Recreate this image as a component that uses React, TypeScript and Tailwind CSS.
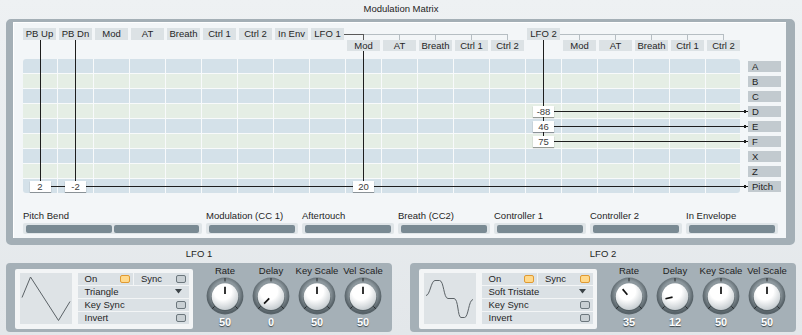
import React from "react";

const topRow: (string | null)[] = [
  "PB Up", "PB Dn", "Mod", "AT", "Breath", "Ctrl 1", "Ctrl 2", "In Env", "LFO 1",
  null, null, null, null, null,
  "LFO 2",
  null, null, null, null, null,
];

const subRow: (string | null)[] = [
  null, null, null, null, null, null, null, null, null,
  "Mod", "AT", "Breath", "Ctrl 1", "Ctrl 2",
  null,
  "Mod", "AT", "Breath", "Ctrl 1", "Ctrl 2",
];

const targets = ["A", "B", "C", "D", "E", "F", "X", "Z", "Pitch"];

// row-col -> amount
const amounts: Record<string, string> = {
  "8-0": "2",
  "8-1": "-2",
  "8-9": "20",
  "3-14": "-88",
  "4-14": "46",
  "5-14": "75",
};

const sources = [
  { label: "Pitch Bend", wide: true },
  { label: "Modulation (CC 1)" },
  { label: "Aftertouch" },
  { label: "Breath (CC2)" },
  { label: "Controller 1" },
  { label: "Controller 2" },
  { label: "In Envelope" },
];

// header button centre / grid column centre in matrix-local px
const hx = (i: number) => 16.5 + i * 36;
const gx = (i: number) => (i === 0 ? 17.5 : 52.5 + (i - 1) * 36);
const ry = (r: number) => 31 + r * 15 + 7.5;

const Wires = () => {
  const arrow = (y: number) => (
    <polygon key={`a${y}`} points={`721,${y - 2} 725,${y} 721,${y + 2}`} fill="#1e1e1e" />
  );
  return (
    <svg
      className="absolute left-0 top-0 z-[5] pointer-events-none"
      width={758}
      height={166}
      shapeRendering="crispEdges"
    >
      {/* LFO 1 bus */}
      <line x1={321} y1={6.5} x2={hx(13)} y2={6.5} stroke="#b6bec3" />
      {[10, 11, 12, 13].map((i) => (
        <line key={i} x1={hx(i)} y1={6.5} x2={hx(i)} y2={11.5} stroke="#b6bec3" />
      ))}
      <line x1={321} y1={6.5} x2={hx(9)} y2={6.5} stroke="#5a5a5a" />
      <line x1={hx(9)} y1={6.5} x2={hx(9)} y2={11.5} stroke="#5a5a5a" />
      {/* LFO 2 bus */}
      <line x1={537} y1={6.5} x2={hx(19)} y2={6.5} stroke="#b6bec3" />
      {[15, 16, 17, 18, 19].map((i) => (
        <line key={i} x1={hx(i)} y1={6.5} x2={hx(i)} y2={11.5} stroke="#b6bec3" />
      ))}

      {/* verticals */}
      <line x1={gx(0)} y1={11.5} x2={gx(0)} y2={ry(8)} stroke="#1e1e1e" />
      <line x1={gx(1)} y1={11.5} x2={gx(1)} y2={ry(8)} stroke="#1e1e1e" />
      <line x1={gx(9)} y1={23} x2={gx(9)} y2={ry(8)} stroke="#1e1e1e" />
      <line x1={gx(14)} y1={11.5} x2={gx(14)} y2={ry(5)} stroke="#1e1e1e" />

      {/* horizontals */}
      <line x1={gx(0)} y1={ry(8)} x2={722} y2={ry(8)} stroke="#1e1e1e" />
      {[3, 4, 5].map((r) => (
        <line key={r} x1={gx(14)} y1={ry(r)} x2={722} y2={ry(r)} stroke="#1e1e1e" />
      ))}
      {[ry(3), ry(4), ry(5), ry(8)].map(arrow)}
    </svg>
  );
};

const Knob = ({ value, id }: { value: number; id: string }) => {
  const a = ((-135 + value * 2.7) * Math.PI) / 180;
  const cx = 19;
  const cy = 19.6;
  const tick = (deg: number) => {
    const t = (deg * Math.PI) / 180;
    return (
      <line
        key={deg}
        x1={19 + Math.sin(t) * 14.6}
        y1={19 - Math.cos(t) * 14.6}
        x2={19 + Math.sin(t) * 18}
        y2={19 - Math.cos(t) * 18}
        stroke="#26292b"
        strokeWidth={1}
      />
    );
  };
  return (
    <svg width={38} height={38} viewBox="0 0 38 38">
      <defs>
        <radialGradient id={`ring-${id}`} cx="50%" cy="45%" r="50%">
          <stop offset="0.72" stopColor="#8c979d" />
          <stop offset="1" stopColor="#576268" />
        </radialGradient>
        <radialGradient id={`cap-${id}`} cx="42%" cy="30%" r="72%">
          <stop offset="0.45" stopColor="#ffffff" />
          <stop offset="1" stopColor="#c3cace" />
        </radialGradient>
      </defs>
      <circle cx={19} cy={19} r={18.4} fill={`url(#ring-${id})`} />
      {[0, -135, 135].map(tick)}
      <circle cx={19} cy={20.6} r={13.8} fill="#3e484d" opacity={0.55} />
      <circle cx={cx} cy={cy} r={13.3} fill={`url(#cap-${id})`} />
      <line
        x1={cx + Math.sin(a) * 2.5}
        y1={cy - Math.cos(a) * 2.5}
        x2={cx + Math.sin(a) * 9.8}
        y2={cy - Math.cos(a) * 9.8}
        stroke="#111"
        strokeWidth={1.7}
      />
    </svg>
  );
};

const Toggle = ({ on }: { on: boolean }) => (
  <div
    className={
      on
        ? "w-[10px] h-[8px] rounded-[2px] border border-[#e09a32] bg-[#ffd98c]"
        : "w-[10px] h-[8px] rounded-[2px] border border-[#6c777d] bg-[#c9d0d4]"
    }
  />
);

const Cell = ({ children }: { children: React.ReactNode }) => (
  <div className="h-[11.5px] bg-[#dbe1e5] flex items-center justify-between pl-[7px] pr-[3px] text-[9.5px] leading-none text-[#262626]">
    {children}
  </div>
);

const TriangleWave = () => (
  <svg width={52} height={51} viewBox="0 0 52 51">
    <polyline points="2,24.5 10.5,4 38.5,47.5 50,28.5" fill="none" stroke="#5b6266" strokeWidth={1} />
  </svg>
);

const SoftTriWave = () => (
  <svg width={52} height={51} viewBox="0 0 52 51">
    <path
      d="M2,22.5 C6,22.5 7,7.5 11,7.5 L15.5,7.5 C20,7.5 19.5,25.5 24,25.5 L30,25.5 C34.5,25.5 33.5,44.5 37,44.5 L40.5,44.5 C44.5,44.5 44.5,27 49,26.5"
      fill="none"
      stroke="#5b6266"
      strokeWidth={1}
    />
  </svg>
);

type LfoProps = {
  title: string;
  id: string;
  wave: React.ReactNode;
  shape: string;
  sync: boolean;
  knobs: number[];
};

const Lfo = ({ title, id, wave, shape, sync, knobs }: LfoProps) => (
  <div className="flex flex-col w-[386px]">
    <div className="h-[18px] flex items-center justify-center text-[9.5px] text-[#1e1e1e]">{title}</div>
    <div className="h-[69px] bg-[#a5b0b7] rounded-[4px] flex items-start pl-[9px] pt-[6px]">
      {/* wave + switches */}
      <div className="w-[178px] h-[60px] bg-[#f3f5f6] rounded-[2px] flex pl-[5px] pt-[4px] gap-[5.5px]">
        <div className="w-[52px] h-[51px] bg-[#dee3e6]">{wave}</div>
        <div className="w-[111.5px] flex flex-col gap-[1.5px]">
          <div className="flex gap-[1.5px]">
            <div className="flex-1">
              <Cell>
                <span>On</span>
                <Toggle on={true} />
              </Cell>
            </div>
            <div className="flex-1">
              <Cell>
                <span>Sync</span>
                <Toggle on={sync} />
              </Cell>
            </div>
          </div>
          <Cell>
            <span>{shape}</span>
            <svg width={8} height={5} className="mr-[3px]">
              <polygon points="0,0 7,0 3.5,4.5" fill="#3b4347" />
            </svg>
          </Cell>
          <Cell>
            <span>Key Sync</span>
            <Toggle on={false} />
          </Cell>
          <Cell>
            <span>Invert</span>
            <Toggle on={false} />
          </Cell>
        </div>
      </div>
      {/* knobs */}
      <div className="ml-[9px] -mt-[4px] flex">
        {["Rate", "Delay", "Key Scale", "Vel Scale"].map((k, i) => (
          <div key={k} className="w-[46px] flex flex-col items-center">
            <div className="h-[12px] leading-[12px] text-[9.5px] text-[#1e1e1e] whitespace-nowrap">{k}</div>
            <Knob value={knobs[i]} id={`${id}-${i}`} />
            <div className="mt-[1px] h-[12px] leading-[12px] text-[11px] font-bold text-white [text-shadow:0_1px_1px_#3b454b]">
              {knobs[i]}
            </div>
          </div>
        ))}
      </div>
    </div>
  </div>
);

const App: React.FC = () => {
  return (
    <div className="w-[802px] h-[335px] overflow-hidden bg-linear-to-b from-[#eef1f3] to-[#e3e7ea] font-['Liberation_Sans',Arial,sans-serif] text-[#1e1e1e]">
      {/* title */}
      <div className="h-[19px] flex items-center justify-center text-[9.5px]">Modulation Matrix</div>

      {/* matrix panel */}
      <div className="ml-[6px] w-[789px] h-[226px] rounded-[5px] border-[#a4afb6] border-t-[3px] border-l-[7px] border-r-[9px] border-b-[7px] bg-[#f3f6f8] shadow-[inset_1px_1px_0_#ffffff]">
        <div className="pl-[10px] pt-[6px]">
          <div className="relative flex w-[758px]">
            <Wires />
            <div className="w-[717px] flex flex-col">
              {/* source header */}
              <div className="grid grid-cols-[repeat(20,33px)] grid-rows-[11.5px_11.5px] gap-x-[3px]">
                {[...topRow, ...subRow].map((s, i) =>
                  s ? (
                    <div
                      key={i}
                      className="bg-[#dce2e5] flex items-center justify-center text-[9.5px] leading-none text-[#262626]"
                    >
                      {s}
                    </div>
                  ) : (
                    <div key={i} />
                  )
                )}
              </div>
              {/* grid */}
              <div className="mt-[8px] grid grid-cols-[34px_repeat(18,35px)_34px] grid-rows-[repeat(9,14px)] gap-[1px] bg-[#f8fafb] rounded-[3px] overflow-hidden">
                {targets.map((t, r) =>
                  Array.from({ length: 20 }).map((_, c) => {
                    const v = amounts[`${r}-${c}`];
                    return (
                      <div
                        key={`${t}-${c}`}
                        className={
                          r % 2 === 0
                            ? "bg-[#d4e1e9] flex items-center justify-center"
                            : "bg-[#e5eee5] flex items-center justify-center"
                        }
                      >
                        {v && (
                          <div className="relative z-10 w-[21px] h-[11px] bg-white text-center text-[9.5px] leading-[11px] text-[#3c3c3c] shadow-[0_1px_1px_rgba(0,0,0,0.35)]">
                            {v}
                          </div>
                        )}
                      </div>
                    );
                  })
                )}
              </div>
            </div>
            {/* destinations */}
            <div className="ml-[8px] mt-[31px] flex flex-col gap-[1px]">
              {targets.map((t) => (
                <div key={t} className="h-[14px] flex items-center">
                  <div className="w-[33px] h-[11px] bg-[#c2cacf] pl-[4px] text-[9.5px] leading-[11px] text-[#1e1e1e]">
                    {t}
                  </div>
                </div>
              ))}
            </div>
          </div>

          {/* source meters */}
          <div className="mt-[17px] flex gap-[4px]">
            {sources.map((s) => (
              <div key={s.label} className={s.wide ? "w-[179px] flex flex-col" : "w-[92px] flex flex-col"}>
                <div className="h-[11px] leading-[11px] text-[9.5px] whitespace-nowrap">{s.label}</div>
                <div className="mt-[2px] h-[11px] bg-[#dfe5e8] rounded-[2px] px-[3px] pt-[2px] pb-[1.5px] flex gap-[2px]">
                  <div className="flex-1 bg-[#798a93] rounded-[2px]" />
                  {s.wide && <div className="flex-1 bg-[#798a93] rounded-[2px]" />}
                </div>
              </div>
            ))}
          </div>
        </div>
      </div>

      {/* LFOs */}
      <div className="flex gap-[18px] pl-[6px]">
        <Lfo title="LFO 1" id="l1" wave={<TriangleWave />} shape="Triangle" sync={false} knobs={[50, 0, 50, 50]} />
        <Lfo title="LFO 2" id="l2" wave={<SoftTriWave />} shape="Soft Tristate" sync={true} knobs={[35, 12, 50, 50]} />
      </div>
    </div>
  );
};

export default App;
